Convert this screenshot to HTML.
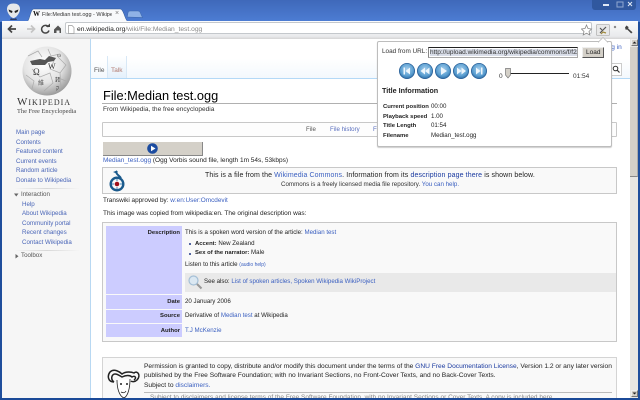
<!DOCTYPE html>
<html><head><meta charset="utf-8"><style>
html,body{margin:0;padding:0;width:640px;height:400px;overflow:hidden;background:#fff}
body{position:relative;font-family:"Liberation Sans",sans-serif;font-size:6.15px;color:#222}
#wrap{position:absolute;left:0;top:0;width:640px;height:400px;overflow:hidden;filter:blur(.35px)}
.a{position:absolute}
.t{position:absolute;white-space:nowrap;line-height:8px;height:8px}
.l{color:#3a5fc0}
.d{color:#1a3aa0}
.b{font-weight:bold;font-size:5.9px}
.s{color:#4a66b8;font-size:6.2px}
</style></head><body><div id="wrap">
<!-- frame -->
<div class="a" style="left:0;top:0;width:640px;height:400px;background:linear-gradient(#3f69ba,#4d7dd4 22px)"></div>
<div class="a" style="left:592px;top:0;width:44px;height:10px;background:#30589f;border-radius:0 0 3px 3px"></div>
<svg class="a" style="left:592px;top:0" width="44" height="10"><rect x="11" y="4" width="6" height="2" fill="#dfe8f5"/><rect x="25" y="2" width="6" height="5" fill="none" stroke="#8fa8d0"/><path d="M40 2l4 4M44 2l-4 4" transform="translate(-4 0)" stroke="#dfe8f5" stroke-width="1"/></svg>
<!-- alien -->
<svg class="a" style="left:6px;top:3px" width="16" height="18"><path d="M1 6C1 2 4 .5 7.500 .5S14 2 14 6C14 10 10 15 7.500 15S1 10 1 6Z" fill="#e6e8ea"/><path d="M2.500 6.500L6.500 8 6 10 3.500 9ZM12.500 6.500L8.500 8 9 10 11.500 9Z" fill="#222"/><path d="M5 15c1 1 4 1 5 0l1 2H4Z" fill="#223" opacity=".7"/></svg>
<!-- tab -->
<svg class="a" style="left:24px;top:8px" width="120" height="14"><path d="M2 14C6 14 6 1 10 1H96C100 1 101 14 105 14Z" fill="#f8f9fb" stroke="#2e568f" stroke-width=".5"/><path d="M103 9C104 9 103 3 106 3H114C117 3 117 9 119 9.500L119 9.500Z" fill="#8fb2e6" stroke="#3c66a8" stroke-width=".5"/></svg>
<div class="t" style="left:33px;top:10px;font-family:'Liberation Serif',serif;font-size:7px;color:#111;font-weight:bold">W</div>
<div class="t" style="left:42px;top:10.500px;width:70px;overflow:hidden;color:#333;font-size:5.500px">File:Median test.ogg - Wikipedia</div>
<div class="t" style="left:115px;top:10px;color:#777;font-size:7px">×</div>
<!-- toolbar -->
<div class="a" style="left:2px;top:21px;width:636px;height:18px;background:linear-gradient(#fafbfc,#e9eaec 85%,#d4d4d4)"></div>
<div class="a" style="left:65px;top:22px;width:527px;height:12px;background:#fff;border:1px solid #c4c8cc;border-radius:2px;box-sizing:border-box"></div>
<svg class="a" style="left:5px;top:22px" width="56" height="14">
<path d="M11 7H4M7 3.500L3.500 7 7 10.500" fill="none" stroke="#444" stroke-width="1.700"/>
<path d="M22 7H29M26 3.500L29.500 7 26 10.500" fill="none" stroke="#c4c4c4" stroke-width="1.700"/>
<path d="M43.500 5A3.800 3.800 0 1 0 44 8.500" fill="none" stroke="#444" stroke-width="1.500"/><path d="M41 5h4V1.500Z" fill="#444"/>
<path d="M50 7.500L54 3.500 58 7.500V11H55.500V8.500H52.500V11H50Z" transform="translate(-1 0)" fill="#555"/>
</svg>
<svg class="a" style="left:67px;top:25px" width="8" height="9"><path d="M1.500 .5H5L7 2.500V8.500H1.500Z" fill="#fff" stroke="#999" stroke-width=".7"/></svg>
<div class="t" style="left:77px;top:25.500px;font-size:6.700px;color:#555"><span style="color:#222">en.wikipedia.org</span><span style="color:#888">/wiki/File:Median_test.ogg</span></div>
<svg class="a" style="left:581px;top:24px" width="60" height="14">
<path d="M5.500 1L7 4.500 10.500 5 8 7.500 8.800 11 5.500 9.200 2.200 11 3 7.500 .5 5 4 4.500Z" fill="#fff" stroke="#888" stroke-width=".8"/>
<rect x="15.500" y=".5" width="13" height="11" fill="#e8e8e8" stroke="#b5b5b5" stroke-width=".8" rx="1"/>
<path d="M19 9L25 3M19 4l2 2" stroke="#555" stroke-width="1.200"/><path d="M20 10l2-2 3 1" stroke="#a08a3c" stroke-width="1.200" fill="none"/>
<path d="M33 2l2 2M35 2l-2 2" stroke="#666" stroke-width=".7"/>
<path d="M45.500 1.500l2 1.500-.3 1.500 4.300 3.800-1.300 1.200-4-4-1.500.3L44 3.500Z" fill="#444"/>
</svg>
<!-- page -->
<div class="a" style="left:2px;top:39px;width:628px;height:359px;background:#f6f6f6"></div>
<div class="a" style="left:90px;top:39px;width:1px;height:359px;background:#b8d8f2"></div>
<div class="a" style="left:91px;top:39px;width:539px;height:359px;background:#fff"></div>
<div class="a" style="left:91px;top:39px;width:539px;height:39px;background:linear-gradient(#fff 50%,#f3f8fd)"></div>
<div class="a" style="left:91px;top:78px;width:539px;height:1px;background:#b4d9f7"></div>
<div class="a" style="left:107px;top:56px;width:20px;height:22px;background:linear-gradient(#fff,#e4f0fb);border-left:1px solid #d8e8f6;border-right:1px solid #d8e8f6;box-sizing:border-box"></div>
<div class="t" style="left:94px;top:67px;color:#555;font-size:6.500px">File</div>
<div class="t" style="left:111px;top:67px;color:#b27a70;font-size:6.500px">Talk</div>
<!-- globe -->
<svg class="a" style="left:20px;top:45px" width="54" height="52">
<defs><radialGradient id="g" cx=".42" cy=".35" r=".72"><stop offset="0" stop-color="#fff"/><stop offset=".55" stop-color="#e4e4e4"/><stop offset="1" stop-color="#8c8c8c"/></radialGradient></defs>
<circle cx="27" cy="26" r="24.500" fill="url(#g)"/>
<path d="M10 16L20 14 25 15 29 11 36 13 34 16 28 17 25 20 12 20Z" fill="#555"/>
<path d="M8 11L18 6 22 12M28 4L31 11 40 9M38 12L46 20 40 28 30 24 34 16M12 24L20 32 30 28 33 38 24 46M6 30L14 36 12 44M36 32L46 36M40 28L41 42" fill="none" stroke="#aaa" stroke-width=".7"/>
<text x="13" y="30" font-family="Liberation Serif,serif" font-size="9" fill="#444">Ω</text>
<text x="28" y="24" font-family="Liberation Serif,serif" font-size="8" fill="#333">W</text>
<text x="35" y="37" font-family="Liberation Serif,serif" font-size="7" fill="#444">И</text>
<text x="18" y="40" font-family="Liberation Serif,serif" font-size="6" fill="#555">維</text>
<text x="37" y="12" font-family="Liberation Serif,serif" font-size="6" fill="#555">ω</text>
<text x="36" y="45" font-family="Liberation Serif,serif" font-size="6" fill="#333">ק</text>
</svg>
<div class="t" style="left:17px;top:96px;font-family:'Liberation Serif',serif;font-size:11px;line-height:12px;height:12px;color:#333;font-variant:small-caps;letter-spacing:1px">Wikipedia</div>
<div class="t" style="left:17px;top:108px;font-family:'Liberation Serif',serif;font-size:6.400px;color:#444">The Free Encyclopedia</div>
<!-- sidebar -->
<div class="t s" style="left:16px;top:129px">Main page</div>
<div class="t s" style="left:16px;top:139px">Contents</div>
<div class="t s" style="left:16px;top:148px">Featured content</div>
<div class="t s" style="left:16px;top:158px">Current events</div>
<div class="t s" style="left:16px;top:167px">Random article</div>
<div class="t s" style="left:16px;top:177px">Donate to Wikipedia</div>
<div class="a" style="left:14px;top:188px;width:66px;height:1px;background:linear-gradient(90deg,#f6f6f6,#d8d8d8,#f6f6f6)"></div>
<svg class="a" style="left:14px;top:193px" width="5" height="4"><path d="M0 .5H4.500L2.250 3.500Z" fill="#666"/></svg>
<div class="t" style="left:21px;top:191px;color:#555;font-size:6.200px">Interaction</div>
<div class="t s" style="left:22px;top:201px">Help</div>
<div class="t s" style="left:22px;top:210px">About Wikipedia</div>
<div class="t s" style="left:22px;top:220px">Community portal</div>
<div class="t s" style="left:22px;top:229px">Recent changes</div>
<div class="t s" style="left:22px;top:239px">Contact Wikipedia</div>
<div class="a" style="left:14px;top:250px;width:66px;height:1px;background:linear-gradient(90deg,#f6f6f6,#d8d8d8,#f6f6f6)"></div>
<svg class="a" style="left:15px;top:254px" width="4" height="5"><path d="M.5 0V4.500L3.500 2.250Z" fill="#666"/></svg>
<div class="t" style="left:21px;top:252px;color:#555;font-size:6.200px">Toolbox</div>
<!-- content -->
<div class="t" style="left:103px;top:88px;font-size:12.800px;line-height:16px;height:16px;color:#000">File:Median test.ogg</div>
<div class="a" style="left:102px;top:103px;width:515px;height:1px;background:#b0b0b0"></div>
<div class="t" style="left:103px;top:106px;color:#333;font-size:6.550px">From Wikipedia, the free encyclopedia</div>
<div class="a" style="left:102px;top:122px;width:515px;height:15px;background:#fdfdfd;border:1px solid #c8c8c8;box-sizing:border-box;border-radius:1px"></div>
<div class="t" style="left:306px;top:126px;color:#555">File</div>
<div class="t" style="left:330px;top:126px;color:#5a6fbf">File history</div>
<div class="t" style="left:373px;top:126px;color:#5a6fbf">F</div>
<div class="a" style="left:103px;top:142px;width:100px;height:14px;background:#d4d0c8;border-right:1px solid #888;border-bottom:1px solid #888;box-sizing:border-box"></div>
<svg class="a" style="left:147px;top:143px" width="11" height="11"><circle cx="5.500" cy="5.500" r="5.300" fill="#1c4ca0"/><path d="M4 2.800L8.500 5.500 4 8.200Z" fill="#fff"/></svg>
<div class="t" style="left:103px;top:157px;font-size:6.500px"><span class="l">Median_test.ogg</span> (Ogg Vorbis sound file, length 1m 54s, 53kbps)</div>
<div class="a" style="left:102px;top:167px;width:515px;height:27px;background:#f9f9f9;border:1px solid #c8c8c8;box-sizing:border-box"></div>
<svg class="a" style="left:108px;top:170px" width="18" height="24"><path d="M9 1C7 4 11 5 13 8" fill="none" stroke="#1a5a8c" stroke-width="2"/><path d="M5 2l4-1.500 .5 3.500Z" fill="#1a5a8c"/><circle cx="9" cy="14" r="6.300" fill="none" stroke="#1a5a8c" stroke-width="2.400"/><path d="M9 9V11M9 17v2M4 14h2M12 14h2" stroke="#6aa0c8" stroke-width="1.300"/><circle cx="9" cy="14" r="2.300" fill="#a01018"/></svg>
<div class="t" style="left:205px;top:172px;font-size:7px;letter-spacing:.11px">This is a file from the <span class="l">Wikimedia Commons</span>. Information from its <span class="d">description page there</span> is shown below.</div>
<div class="t" style="left:281px;top:181px;font-size:6.200px;color:#333">Commons is a freely licensed media file repository. <span class="l">You can help.</span></div>
<div class="t" style="left:103px;top:197px;font-size:6.400px">Transwiki approved by: <span class="l">w:en:User:Omcdevit</span></div>
<div class="t" style="left:103px;top:210px;font-size:6.480px">This image was copied from wikipedia:en. The original description was:</div>
<!-- table -->
<div class="a" style="left:102px;top:222px;width:515px;height:120px;background:#f9f9f9;border:1px solid #c8c8c8;box-sizing:border-box"></div>
<div class="a" style="left:106px;top:226px;width:76px;height:68px;background:#ccccff"></div>
<div class="a" style="left:106px;top:295px;width:76px;height:14px;background:#ccccff"></div>
<div class="a" style="left:106px;top:310px;width:76px;height:13px;background:#ccccff"></div>
<div class="a" style="left:106px;top:324px;width:76px;height:13px;background:#ccccff"></div>
<div class="t b" style="right:460px;top:229px">Description</div>
<div class="t b" style="right:460px;top:298px">Date</div>
<div class="t b" style="right:460px;top:312px">Source</div>
<div class="t b" style="right:460px;top:327px">Author</div>
<div class="t" style="left:185px;top:229px">This is a spoken word version of the article: <span class="l">Median test</span></div>
<div class="a" style="left:189px;top:243px;width:2px;height:2px;background:#223a88;border-radius:1px"></div>
<div class="a" style="left:189px;top:253px;width:2px;height:2px;background:#223a88;border-radius:1px"></div>
<div class="t" style="left:195px;top:240px"><span class="b">Accent:</span> New Zealand</div>
<div class="t" style="left:195px;top:249px"><span class="b">Sex of the narrator:</span> Male</div>
<div class="t" style="left:185px;top:261px">Listen to this article <span class="l" style="font-size:5px">(audio help)</span></div>
<div class="a" style="left:185px;top:273px;width:431px;height:19px;background:#e9e9e9"></div>
<svg class="a" style="left:187px;top:274px" width="16" height="17"><circle cx="6.500" cy="6.500" r="4.500" fill="#dbe8f2" stroke="#a4bfd6" stroke-width="1.200"/><path d="M10 10L14.500 14.500" stroke="#999" stroke-width="2"/></svg>
<div class="t" style="left:204px;top:278px">See also: <span class="l">List of spoken articles, Spoken Wikipedia WikiProject</span></div>
<div class="t" style="left:185px;top:298px">20 January 2006</div>
<div class="t" style="left:185px;top:312px">Derivative of <span class="l">Median test</span> at Wikipedia</div>
<div class="t l" style="left:185px;top:327px">T.J McKenzie</div>
<!-- gnu -->
<div class="a" style="left:102px;top:357px;width:515px;height:50px;background:#f9f9f9;border:1px solid #d4d4d4;box-sizing:border-box"></div>
<svg class="a" style="left:106px;top:368px" width="34" height="32"><path d="M8 14C2 14 1 8 4 4 8 0 14 4 16 6 20 3 26 4 28 5 32 2 35 8 31 12 29 14 26 14 25 13M8 14C4 11 6 6 9 6 12 6 14 8 16 9 20 7 24 7 26 9 29 7 31 10 28 12" fill="none" stroke="#222" stroke-width="1.500"/><path d="M11 12C11 20 13 28 18 30 22 28 24 20 24 11" fill="#fff" stroke="#222" stroke-width=".8"/><circle cx="15" cy="16" r="1" fill="#222"/><circle cx="21" cy="16" r="1" fill="#222"/><path d="M15 24c2 1 4 1 5-1" fill="none" stroke="#222" stroke-width=".7"/></svg>
<div class="t" style="left:144px;top:363px;font-size:6.650px">Permission is granted to copy, distribute and/or modify this document under the terms of the <span class="d">GNU Free Documentation License</span>, Version 1.2 or any later version</div>
<div class="t" style="left:144px;top:372px;font-size:6.650px">published by the Free Software Foundation; with no Invariant Sections, no Front-Cover Texts, and no Back-Cover Texts.</div>
<div class="t" style="left:144px;top:382px;font-size:6.650px">Subject to <span class="l">disclaimers.</span></div>
<div class="a" style="left:144px;top:392px;width:468px;height:1px;background:#bbb"></div>
<div class="t" style="left:150px;top:394px;font-size:6.500px;color:#888">Subject to disclaimers and license terms of the Free Software Foundation, with no Invariant Sections or Cover Texts. A copy is included here.</div>
<!-- log in & search behind popup -->
<div class="t l" style="left:604px;top:43.500px;font-size:6.500px">Log in</div>
<div class="a" style="left:600px;top:63px;width:22px;height:13px;background:#fff;border:1px solid #ccc;box-sizing:border-box"></div>
<svg class="a" style="left:612px;top:65px" width="9" height="9"><circle cx="3.500" cy="3.500" r="2.300" fill="none" stroke="#333"/><path d="M5 5l2.500 2.500" stroke="#333" stroke-width="1.200"/></svg>
<!-- scrollbar -->
<div class="a" style="left:630px;top:39px;width:8px;height:359px;background:#e8e6e2"></div>
<div class="a" style="left:630px;top:47px;width:8px;height:130px;background:#d4d0c8;border-bottom:1px solid #888;border-right:1px solid #aaa;box-sizing:border-box"></div>
<div class="a" style="left:631px;top:39px;width:7px;height:7px;background:#d4d0c8;border:1px solid #eee;border-right-color:#777;border-bottom-color:#777;box-sizing:border-box"></div>
<svg class="a" style="left:631px;top:39px" width="7" height="7"><path d="M1.500 4.500H5.500L3.500 2.500Z" fill="#222"/></svg>
<div class="a" style="left:631px;top:390px;width:7px;height:7px;background:#d4d0c8;border:1px solid #eee;border-right-color:#777;border-bottom-color:#777;box-sizing:border-box"></div>
<svg class="a" style="left:631px;top:390px" width="7" height="7"><path d="M1.500 2.500H5.500L3.500 4.500Z" fill="#222"/></svg>
<!-- popup -->
<div class="a" style="left:377px;top:41px;width:235px;height:106px;background:#fff;border:1px solid #bdbdbd;border-radius:2px;box-sizing:border-box;box-shadow:0 1px 1px rgba(0,0,0,.2)"></div>
<svg class="a" style="left:598px;top:37px" width="11" height="6"><path d="M0 5.500L5 .5 10 5.500" fill="#fff" stroke="#bdbdbd" stroke-width=".8"/></svg>
<div class="t" style="left:382px;top:48px;color:#333;font-size:6.400px">Load from URL:</div>
<div class="a" style="left:428px;top:47px;width:150px;height:11px;background:#fff;border:1px solid #aaa;border-top-color:#222;border-left-color:#888;box-sizing:border-box;overflow:hidden"></div>
<div class="t" style="left:430px;top:48.500px;width:147px;overflow:hidden;font-size:6.500px;color:#333"><span style="background:#d8dde8">http://upload.wikimedia.org/wikipedia/commons/f/f2/Median_test.ogg</span></div>
<div class="a" style="left:582px;top:47px;width:22px;height:11px;background:#d4d0c8;border:1px solid #eee;border-right-color:#555;border-bottom-color:#555;box-sizing:border-box"></div>
<div class="t" style="left:586px;top:48.500px;font-size:6.500px;color:#222">Load</div>
<svg class="a" style="left:398px;top:62px" width="90" height="18">
<defs><radialGradient id="b" cx=".5" cy=".4" r=".6"><stop offset="0" stop-color="#a8d0ee"/><stop offset=".7" stop-color="#5a9ed0"/><stop offset="1" stop-color="#2f6ea8"/></radialGradient></defs>
<g stroke="#2a6098" stroke-width=".8" fill="url(#b)"><circle cx="9" cy="9" r="7.600"/><circle cx="27" cy="9" r="7.600"/><circle cx="45" cy="9" r="7.600"/><circle cx="63" cy="9" r="7.600"/><circle cx="81" cy="9" r="7.600"/></g>
<g fill="#eef6fc"><rect x="5.500" y="5.500" width="1.500" height="7"/><path d="M12 5.500V12.500L7.500 9Z"/><path d="M27 5.500V12.500L22.500 9ZM31.500 5.500V12.500L27 9Z"/><path d="M43 5V13L49 9Z"/><path d="M59 5.500V12.500L63.500 9ZM63.500 5.500V12.500L68 9Z"/><path d="M78 5.500V12.500L82.500 9Z"/><rect x="83" y="5.500" width="1.500" height="7"/></g>
</svg>
<div class="a" style="left:510px;top:73px;width:59px;height:1px;background:#222"></div>
<svg class="a" style="left:505px;top:68px" width="7" height="11"><path d="M.5 .5H5.500V7L3 10 .5 7Z" fill="#d4d0c8" stroke="#777" stroke-width=".7"/></svg>
<div class="t" style="left:499px;top:73px;color:#333;font-size:6.500px">0</div>
<div class="t" style="left:573px;top:73px;color:#333;font-size:6.500px">01:54</div>
<div class="t" style="left:382px;top:87px;font-size:7.200px;font-weight:bold;color:#222">Title Information</div>
<div class="t b" style="left:383px;top:103px;color:#222">Current position</div><div class="t" style="left:431px;top:103px">00:00</div>
<div class="t b" style="left:383px;top:113px;color:#222">Playback speed</div><div class="t" style="left:431px;top:113px">1.00</div>
<div class="t b" style="left:383px;top:122px;color:#222">Title Length</div><div class="t" style="left:431px;top:122px">01:54</div>
<div class="t b" style="left:383px;top:132px;color:#222">Filename</div><div class="t" style="left:431px;top:132px">Median_test.ogg</div>
<!-- frame borders -->
<div class="a" style="left:0;top:22px;width:2px;height:378px;background:#1f4e9c"></div>
<div class="a" style="left:638px;top:22px;width:2px;height:378px;background:#1f4e9c"></div>
<div class="a" style="left:0;top:398px;width:640px;height:2px;background:#1b4a98"></div>
</div></body></html>
